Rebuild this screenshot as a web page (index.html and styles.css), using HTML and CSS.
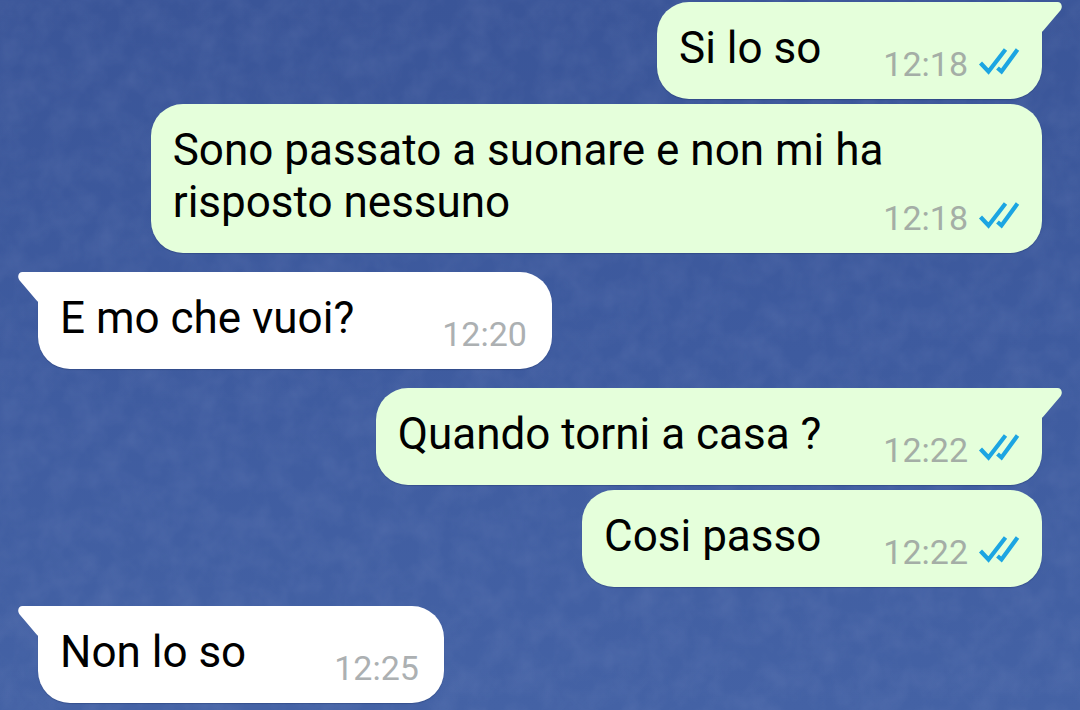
FILE: index.html
```
<!DOCTYPE html>
<html lang="it">
<head>
    <meta charset="UTF-8">
    <meta name="viewport" content="width=device-width, initial-scale=1.0">
    <title>Chat</title>
    <link rel="stylesheet" href="styles.css">
</head>
<body>
    <!-- shared shapes -->
    <svg class="symbols" aria-hidden="true">
        <symbol id="ticks" viewBox="0 0 42 30">
            <path d="M2.5 16L10.5 24.5L27.5 2.500M19.5 21L23.500 24.500L39.5 2.500" fill="none" stroke="#1ca5e2" stroke-width="4.200" />
        </symbol>
        <symbol id="tail" viewBox="0 0 20 30">
            <path d="M0 0H15.5C19 0 21 4 19 7.500Q18.500 8.500 17.500 9.500L0.500 29.500H0Z" fill="currentColor" />
        </symbol>
    </svg>

    <main class="chat">
        <div class="message out first">
            <p class="text">Si lo so</p>
            <div class="meta">
                <time>12:18</time>
                <svg class="ticks" role="img" aria-label="Letto"><use href="#ticks" /></svg>
            </div>
            <svg class="tail" aria-hidden="true"><use href="#tail" /></svg>
        </div>
        <div class="message out long">
            <p class="text">Sono passato a suonare e non mi ha<br>risposto nessuno</p>
            <div class="meta">
                <time>12:18</time>
                <svg class="ticks" role="img" aria-label="Letto"><use href="#ticks" /></svg>
            </div>
        </div>
        <div class="message in first">
            <p class="text">E mo che vuoi?</p>
            <div class="meta"><time>12:20</time></div>
            <svg class="tail" aria-hidden="true"><use href="#tail" /></svg>
        </div>
        <div class="message out first">
            <p class="text">Quando torni a casa ?</p>
            <div class="meta">
                <time>12:22</time>
                <svg class="ticks" role="img" aria-label="Letto"><use href="#ticks" /></svg>
            </div>
            <svg class="tail" aria-hidden="true"><use href="#tail" /></svg>
        </div>
        <div class="message out">
            <p class="text">Cosi passo</p>
            <div class="meta">
                <time>12:22</time>
                <svg class="ticks" role="img" aria-label="Letto"><use href="#ticks" /></svg>
            </div>
        </div>
        <div class="message in first">
            <p class="text">Non lo so</p>
            <div class="meta"><time>12:25</time></div>
            <svg class="tail" aria-hidden="true"><use href="#tail" /></svg>
        </div>
    </main>
</body>
</html>
```
FILE: styles.css
```
* {
    box-sizing: border-box;
}
body {
    margin: 0;
    min-height: 100vh;
    font-family: Roboto, sans-serif;
    /* denim wallpaper: soft noise over a blue gradient */
    background:
        url("data:image/svg+xml,%3Csvg xmlns='http://www.w3.org/2000/svg' width='540' height='360'%3E%3Cfilter id='n' x='0' y='0' width='1' height='1'%3E%3CfeTurbulence type='fractalNoise' baseFrequency='.04' numOctaves='3' stitchTiles='stitch'/%3E%3CfeColorMatrix values='0 0 0 0 .5 0 0 0 0 .55 0 0 0 0 .8 1 0 0 0 -.35'/%3E%3C/filter%3E%3Crect width='540' height='360' filter='url(%23n)' opacity='.15'/%3E%3C/svg%3E"),
        linear-gradient(#3a5598, #3e5b9f 50%, #4462a5);
}
.symbols {
    display: none;
}
.chat {
    display: flex;
    flex-direction: column;
    gap: 5px;
    padding: 2px 38px 7px;
}
.message {
    position: relative;
    display: flex;
    align-items: flex-end;
    padding: 20px 22px 18px;
    border-radius: 32px;
    box-shadow: 0 1px 1px rgba(20, 40, 90, 0.3);
}
.out {
    align-self: flex-end;
    gap: 62px;
    color: #e5ffdb;
    background: #e5ffdb;
}
.in {
    align-self: flex-start;
    gap: 88px;
    padding-right: 25px;
    color: #fff;
    background: #fff;
}
.long {
    gap: 0;
}
.out.first {
    border-top-right-radius: 0;
}
.in.first {
    border-top-left-radius: 0;
}
/* extra space when the sender changes */
.out + .in,
.in + .out {
    margin-top: 14px;
}
.text {
    margin: 0 0 7px;
    font-size: 44px;
    line-height: 52px;
    color: #000;
}
.meta {
    display: flex;
    align-items: flex-end;
    gap: 10px;
    font-size: 34px;
    line-height: 34px;
    color: #a4aea6;
}
.in .meta {
    color: #acb0b2;
}
.ticks {
    width: 42px;
    height: 30px;
    margin-bottom: 4px;
}
.tail {
    position: absolute;
    top: 0;
    left: 100%;
    width: 20px;
    height: 30px;
}
.in .tail {
    left: auto;
    right: 100%;
    transform: scaleX(-1);
}
```
